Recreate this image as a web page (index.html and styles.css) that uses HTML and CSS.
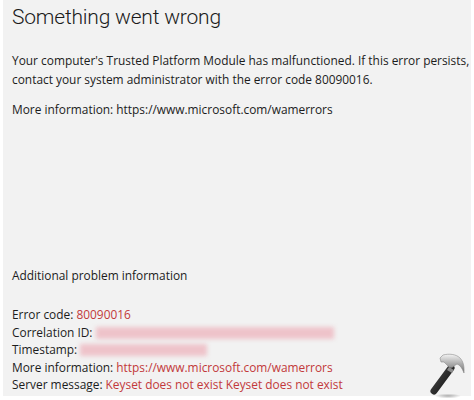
FILE: index.html
```html
<!DOCTYPE html>
<html>
<head>
<meta charset="utf-8">
<link rel="stylesheet" href="styles.css">
</head>
<body>
<div class="panel">
  <h1 class="title">Something went wrong</h1>
  <p class="msg msg-first">Your computer's Trusted Platform Module has malfunctioned. If this error persists,<br>contact your system administrator with the error code 80090016.</p>
  <p class="msg msg-second">More information: https://www.microsoft.com/wamerrors</p>
  <div class="details">
    <p class="heading">Additional problem information</p>
    <div class="rows">
      <div class="row">Error code: <span class="red">80090016</span></div>
      <div class="row">Correlation ID: <span class="blur blur-long"></span></div>
      <div class="row">Timestamp: <span class="blur blur-short"></span></div>
      <div class="row">More information: <span class="red">https://www.microsoft.com/wamerrors</span></div>
      <div class="row">Server message: <span class="red">Keyset does not exist Keyset does not exist</span></div>
    </div>
  </div>
  <svg class="hammer" width="44" height="46" viewBox="0 0 44 46">
    <defs>
      <linearGradient id="hg" x1="0" y1="0" x2="0" y2="1">
        <stop offset="0" stop-color="#f4f4f4"/>
        <stop offset="0.45" stop-color="#b4b4b4"/>
        <stop offset="1" stop-color="#707070"/>
      </linearGradient>
      <linearGradient id="hd" x1="0" y1="0" x2="1" y2="1">
        <stop offset="0" stop-color="#4a4a4a"/>
        <stop offset="1" stop-color="#111"/>
      </linearGradient>
      <radialGradient id="sh" cx="0.5" cy="0.5" r="0.5">
        <stop offset="0" stop-color="#000" stop-opacity="0.3"/>
        <stop offset="1" stop-color="#000" stop-opacity="0"/>
      </radialGradient>
    </defs>
    <ellipse cx="24" cy="43" rx="13" ry="2.5" fill="url(#sh)"/>
    <path d="M27 15 L10 38" stroke="url(#hd)" stroke-width="7" stroke-linecap="round"/>
    <path d="M25 14 L30 17 L28 20 L23 17 Z" fill="#8a8a8a"/>
    <path d="M16 5 L19 2 C25 0.5 32 1 36 5 C39 8 40.5 13 40 20 C38 15 36 12 33 11 L30 13 C28 15 26 15 24 13 L20 9 L17 9 Z" fill="url(#hg)" stroke="#8c8c8c" stroke-width="0.6"/>
  </svg>
</div>
</body>
</html>
```
FILE: styles.css
```css
html, body {
  margin: 0;
  padding: 0;
  background: #ffffff;
}
body {
  width: 474px;
  height: 400px;
  overflow: hidden;
  font-family: "Open Sans", "Noto Sans", sans-serif;
  color: #1c1c1c;
}
.panel {
  position: relative;
  margin: 0 3px;
  height: 396px;
  background: #f2f2f2;
  padding: 0 0 0 9px;
  box-sizing: border-box;
}
.title {
  margin: 0;
  padding-top: 3px;
  font-family: Roboto, "Open Sans", sans-serif;
  font-size: 21px;
  font-weight: 300;
  letter-spacing: -0.2px;
  line-height: 28px;
  color: #1a1a1a;
}
.msg {
  margin: 0;
  font-size: 11.9px;
  line-height: 19px;
  white-space: nowrap;
}
.msg-first {
  margin-top: 20px;
}
.msg-second {
  margin-top: 11px;
}
.details {
  margin-top: 147px;
  font-size: 11.9px;
  line-height: 18px;
}
.heading {
  margin: 0;
}
.rows {
  margin-top: 22px;
}
.row {
  line-height: 17.6px;
  white-space: nowrap;
}
.red {
  color: #c2393a;
}
.blur {
  display: inline-block;
  height: 12px;
  vertical-align: -2px;
  background: #eec3ca;
  filter: blur(2px);
}
.blur-long { width: 238px; }
.blur-short { width: 127px; }
.hammer {
  position: absolute;
  right: 3px;
  bottom: -3px;
}
```
